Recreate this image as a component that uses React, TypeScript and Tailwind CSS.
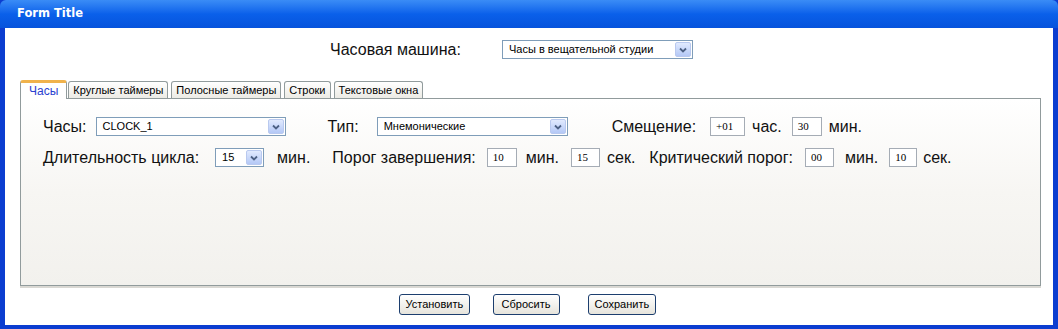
import type { ReactNode } from 'react'

const label = "font-['Liberation_Sans',Arial,sans-serif] text-[16px] text-[#111] leading-none whitespace-nowrap"
const small = "font-['Liberation_Sans',Tahoma,sans-serif] text-[11px] text-black"

function Arrow() {
  return (
    <div className="w-[16px] h-[15px] my-auto mr-[1px] rounded-[2px] border border-[#b9c9ef] bg-gradient-to-b from-[#e1eafe] to-[#b4c8f6] flex items-center justify-center">
      <svg width="8" height="6" viewBox="0 0 8 6">
        <path d="M1 1.5 L4 4.5 L7 1.5" stroke="#4d6185" strokeWidth="1.8" fill="none" />
      </svg>
    </div>
  )
}

function Select({ value, w, className = '' }: { value: string; w: string; className?: string }) {
  return (
    <div className={`${w} h-[19px] bg-white border border-[#7f9db9] flex items-stretch ${className}`}>
      <span className={`${small} flex-1 pl-[6px] leading-[17px] whitespace-nowrap overflow-hidden`}>{value}</span>
      <Arrow />
    </div>
  )
}

function Field({ value, w, className = '' }: { value: string; w: string; className?: string }) {
  return (
    <div className={`${w} h-[19px] bg-white border border-[#a5acb5] pl-[5px] font-['Liberation_Serif','Times_New_Roman',serif] text-[11px] leading-[17px] text-black ${className}`}>
      {value}
    </div>
  )
}

function Tab({ children, active, className = '' }: { children: ReactNode; active?: boolean; className?: string }) {
  if (active) {
    return (
      <div className={`h-[19px] -mb-px relative z-10 px-[8px] bg-white border-x border-[#919b9c] rounded-t-[3px] border-t-[3px] border-t-[#f0b24c] flex items-center font-['Liberation_Sans',Tahoma,sans-serif] text-[12px] text-[#2a3fd0] ${className}`}>
        {children}
      </div>
    )
  }
  return (
    <div className={`h-[17px] mt-[1px] px-[4px] bg-gradient-to-b from-white to-[#ecebe5] border border-b-0 border-[#919b9c] rounded-t-[3px] flex items-center font-['Liberation_Sans',Tahoma,sans-serif] text-[11px] text-black ${className}`}>
      {children}
    </div>
  )
}

function Btn({ children, className = '' }: { children: ReactNode; className?: string }) {
  return (
    <button className={`h-[21px] px-[6px] rounded-[3px] border border-[#1c3e6e] bg-gradient-to-b from-white to-[#e6e4dc] font-['Liberation_Sans',Tahoma,sans-serif] text-[11px] text-black leading-none ${className}`}>
      {children}
    </button>
  )
}

export default function App() {
  return (
    <div className="w-[1058px] h-[329px] flex flex-col bg-[#0b3dd0] overflow-hidden">
      <div className="h-[28px] shrink-0 rounded-t-[6px] bg-gradient-to-b from-[#3a8cf6] via-[#0a60ea] to-[#0653dc] flex items-center pl-[17px] font-['DejaVu_Sans',Tahoma,sans-serif] font-bold text-[11.5px] text-white">
        Form Title
      </div>

      <div className="flex-1 mx-[5px] mb-[4px] bg-white flex flex-col">
        <div className="flex items-center mt-[12px] pl-[325px]">
          <span className={`${label} w-[172px]`}>Часовая машина:</span>
          <Select value="Часы в вещательной студии" w="w-[191px]" />
        </div>

        <div className="flex items-end mt-[21px] pl-[15px] pr-[12px]">
          <Tab active>Часы</Tab>
          <Tab className="ml-[1px]">Круглые таймеры</Tab>
          <Tab className="ml-[3px]">Полосные таймеры</Tab>
          <Tab className="ml-[3px]">Строки</Tab>
          <Tab className="ml-[3px]">Текстовые окна</Tab>
        </div>

        <div className="ml-[15px] mr-[12px] h-[188px] border border-[#919b9c] bg-gradient-to-b from-white via-[#f7f6f3] to-[#f2f1ed] shadow-[0_2px_0_#d9d8d3] flex flex-col pt-[18px] pl-[22px] gap-[12px]">
          <div className="flex items-center">
            <span className={label}>Часы:</span>
            <Select value="CLOCK_1" w="w-[190px]" className="ml-[9px]" />
            <span className={`${label} ml-[42px]`}>Тип:</span>
            <Select value="Мнемонические" w="w-[191px]" className="ml-[18px]" />
            <span className={`${label} ml-[44px]`}>Смещение:</span>
            <Field value="+01" w="w-[35px]" className="ml-[14px]" />
            <span className={`${label} ml-[7px]`}>час.</span>
            <Field value="30" w="w-[30px]" className="ml-[10px]" />
            <span className={`${label} ml-[7px]`}>мин.</span>
          </div>
          <div className="flex items-center">
            <span className={label}>Длительность цикла:</span>
            <Select value="15" w="w-[49px]" className="ml-[16px]" />
            <span className={`${label} ml-[13px]`}>мин.</span>
            <span className={`${label} ml-[22px]`}>Порог завершения:</span>
            <Field value="10" w="w-[30px]" className="ml-[11px]" />
            <span className={`${label} ml-[9px]`}>мин.</span>
            <Field value="15" w="w-[29px]" className="ml-[12px]" />
            <span className={`${label} ml-[7px]`}>сек.</span>
            <span className={`${label} ml-[14px]`}>Критический порог:</span>
            <Field value="00" w="w-[29px]" className="ml-[12px]" />
            <span className={`${label} ml-[11px]`}>мин.</span>
            <Field value="10" w="w-[28px]" className="ml-[11px]" />
            <span className={`${label} ml-[6px]`}>сек.</span>
          </div>
        </div>

        <div className="flex justify-center mt-[8px] pr-[4px]">
          <Btn className="w-[71px]">Установить</Btn>
          <Btn className="ml-[23px] w-[67px]">Сбросить</Btn>
          <Btn className="ml-[28px] w-[68px]">Сохранить</Btn>
        </div>
      </div>
    </div>
  )
}
